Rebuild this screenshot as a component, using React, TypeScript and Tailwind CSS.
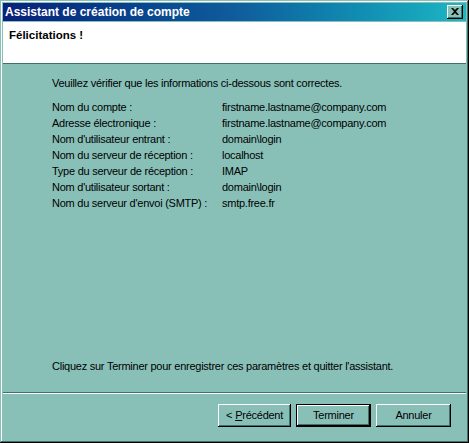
const rows: [string, string][] = [
  ["Nom du compte :", "firstname.lastname@company.com"],
  ["Adresse électronique :", "firstname.lastname@company.com"],
  ["Nom d'utilisateur entrant :", "domain\\login"],
  ["Nom du serveur de réception :", "localhost"],
  ["Type du serveur de réception :", "IMAP"],
  ["Nom d'utilisateur sortant :", "domain\\login"],
  ["Nom du serveur d'envoi (SMTP) :", "smtp.free.fr"],
]

function Btn({ children, isDefault, narrow }: { children: React.ReactNode; isDefault?: boolean; narrow?: boolean }) {
  return (
    <div
      className={
        isDefault
          ? "w-[75px] h-[23px] border border-black flex"
          : narrow
            ? "w-[73px] h-[23px] flex"
            : "w-[75px] h-[23px] flex"
      }
    >
      <div className="flex-1 flex items-center justify-center bg-[#88c0b8] shadow-[inset_-1px_-1px_0_#000,inset_1px_1px_0_#fff,inset_-2px_-2px_0_#40706a] text-[11px] tracking-[-0.25px] text-black">
        {children}
      </div>
    </div>
  )
}

export default function App() {
  return (
    <div className="w-[469px] h-[443px] bg-[#88c0b8] p-[3px] flex flex-col font-['Liberation_Sans',Arial,sans-serif] shadow-[inset_-1px_-1px_0_#000,inset_1px_1px_0_#88c0b8,inset_-2px_-2px_0_#40706a,inset_2px_2px_0_#fff]">
      {/* Title bar */}
      <div className="h-[18px] shrink-0 flex items-center justify-between pl-[2px] pr-[3px] bg-linear-to-r from-[#0a1f7a] via-[#0f5c9c] to-[#1db7c4]">
        <span className="text-white font-bold text-[12px] leading-[18px]">Assistant de création de compte</span>
        <div className="w-[16px] h-[14px] bg-[#88c0b8] flex items-center justify-center shadow-[inset_-1px_-1px_0_#000,inset_1px_1px_0_#fff,inset_-2px_-2px_0_#40706a]">
          <svg width="8" height="7" viewBox="0 0 8 7" className="mb-[1px]">
            <path d="M0 0h2l2 2 2-2h2L5 3.5 8 7H6L4 5 2 7H0l3-3.5z" fill="#000" />
          </svg>
        </div>
      </div>

      {/* Header */}
      <div className="mt-[1px] h-[42px] shrink-0 bg-white border-b border-[#40706a] pt-[6px] pl-[6px]">
        <div className="font-bold text-[11.5px] leading-[14px] text-black">Félicitations !</div>
      </div>

      {/* Body */}
      <div className="flex-1 flex flex-col pl-[49px] pt-[11px] pb-[18px] text-[11px] leading-[16px] tracking-[-0.25px] text-black">
        <div>Veuillez vérifier que les informations ci-dessous sont correctes.</div>
        <div className="mt-[8px] flex flex-col">
          {rows.map(([k, v]) => (
            <div key={k} className="flex h-[16px]">
              <div className="w-[170px] shrink-0">{k}</div>
              <div>{v}</div>
            </div>
          ))}
        </div>
        <div className="flex-1" />
        <div>Cliquez sur Terminer pour enregistrer ces paramètres et quitter l'assistant.</div>
      </div>

      {/* Separator */}
      <div className="h-[2px] shrink-0 border-t border-[#40706a] border-b border-b-white" />

      {/* Buttons */}
      <div className="h-[46px] shrink-0 flex items-start justify-end pt-[10px] pr-[15px]">
        <Btn narrow>
          &lt; <span className="underline ml-[3px]">P</span>récédent
        </Btn>
        <div className="ml-[5px]">
          <Btn isDefault>Terminer</Btn>
        </div>
        <div className="ml-[5px]">
          <Btn>Annuler</Btn>
        </div>
      </div>
    </div>
  )
}
